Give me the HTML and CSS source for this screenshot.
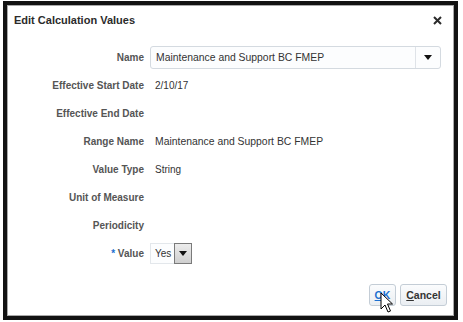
FILE: index.html
```html
<!DOCTYPE html>
<html>
<head>
<meta charset="utf-8">
<link rel="stylesheet" href="styles.css">
</head>
<body>
<div class="frame">
  <div class="dialog">
    <div class="header">
      <span class="title">Edit Calculation Values</span>
      <svg class="close" width="9" height="9" viewBox="0 0 9 9"><path d="M1 1L8 8M8 1L1 8" stroke="#2b2b2b" stroke-width="2"/></svg>
    </div>
    <div class="form">
      <div class="label">Name</div>
      <div class="value">
        <div class="select-wide">
          <span class="sel-text">Maintenance and Support BC FMEP</span>
          <span class="sel-btn"><svg width="8" height="5" viewBox="0 0 8 5"><path d="M0 0H8L4 5Z" fill="#111"/></svg></span>
        </div>
      </div>
      <div class="label">Effective Start Date</div>
      <div class="value text">2/10/17</div>
      <div class="label">Effective End Date</div>
      <div class="value text"></div>
      <div class="label">Range Name</div>
      <div class="value text long">Maintenance and Support BC FMEP</div>
      <div class="label">Value Type</div>
      <div class="value text">String</div>
      <div class="label">Unit of Measure</div>
      <div class="value text"></div>
      <div class="label">Periodicity</div>
      <div class="value text"></div>
      <div class="label"><span class="req">*</span> Value</div>
      <div class="value">
        <div class="select-small">
          <span class="small-text">Yes</span>
          <span class="small-btn"><svg width="8" height="5" viewBox="0 0 8 5"><path d="M0 0H8L4 5Z" fill="#111"/></svg></span>
        </div>
      </div>
    </div>
    <div class="footer">
      <button class="btn ok"><span class="u">O</span>K</button>
      <button class="btn cancel"><span class="u">C</span>ancel</button>
      <svg class="cursor" width="14" height="22" viewBox="0 0 14 22"><path d="M1 1L1 17L5 13L8 20L10.5 19L7.5 12L12.5 12Z" fill="#fff" stroke="#000" stroke-width="1" stroke-linejoin="round"/></svg>
    </div>
  </div>
</div>
</body>
</html>
```

FILE: styles.css
```css
html, body {
  margin: 0;
  padding: 0;
  background: #fff;
}
body {
  width: 463px;
  height: 322px;
  overflow: hidden;
  font-family: "Liberation Sans", Arial, sans-serif;
}
.frame {
  margin: 1px 5px 0 3px;
  height: 319px;
  box-sizing: border-box;
  border: 4px solid #121212;
}
.dialog {
  height: 100%;
  box-sizing: border-box;
  border: 1px solid #a9a9a9;
  background: #fff;
  display: flex;
  flex-direction: column;
}
.header {
  height: 37px;
  box-sizing: border-box;
  padding: 8px 11px 0 6px;
  display: flex;
  justify-content: space-between;
  align-items: flex-start;
}
.title {
  font-size: 11px;
  font-weight: bold;
  color: #2b2b2b;
  line-height: 13px;
}
.close {
  margin-top: 2px;
}
.form {
  display: grid;
  grid-template-columns: 136px 1fr;
  grid-auto-rows: 28px;
  column-gap: 6px;
  padding-right: 11px;
}
.label {
  font-size: 10px;
  font-weight: bold;
  color: #555;
  text-align: right;
  align-self: center;
}
.req {
  color: #1c6fd0;
}
.value {
  font-size: 10px;
  color: #333;
  display: flex;
  align-items: center;
}
.value.text {
  padding-left: 5px;
}
.value.long {
  font-size: 10.4px;
}
.select-wide {
  width: 291px;
  height: 23px;
  box-sizing: border-box;
  border: 1px solid #d4dae0;
  border-radius: 3px;
  background: #fcfdfe;
  display: flex;
  align-items: stretch;
}
.sel-text {
  flex: 1;
  padding-left: 5px;
  display: flex;
  align-items: center;
  font-size: 10.4px;
}
.sel-btn {
  width: 24px;
  border-left: 1px solid #dfe3e8;
  display: flex;
  align-items: center;
  justify-content: center;
}
.select-small {
  display: flex;
  height: 21px;
}
.small-text {
  width: 24px;
  box-sizing: border-box;
  border: 1px solid #e3e7eb;
  border-right: none;
  background: #fcfdfe;
  padding-left: 4px;
  display: flex;
  align-items: center;
}
.small-btn {
  width: 18px;
  box-sizing: border-box;
  border: 1px solid #7a7a7a;
  background: linear-gradient(#ececec, #cfcfcf);
  display: flex;
  align-items: center;
  justify-content: center;
}
.footer {
  position: relative;
  display: flex;
  justify-content: flex-end;
  gap: 4px;
  padding: 17px 6px 0 0;
}
.btn {
  height: 22px;
  box-sizing: border-box;
  border: 1px solid #c4cdd6;
  border-radius: 3px;
  background: linear-gradient(#fbfcfd, #eaeef2);
  font-family: "Liberation Sans", Arial, sans-serif;
  font-size: 10.5px;
  font-weight: bold;
  color: #333;
  padding: 0;
}
.ok {
  width: 27px;
  color: #1c6fd0;
}
.cancel {
  width: 47px;
}
.u {
  text-decoration: underline;
}
.cursor {
  position: absolute;
  left: 372px;
  top: 25px;
}
```
